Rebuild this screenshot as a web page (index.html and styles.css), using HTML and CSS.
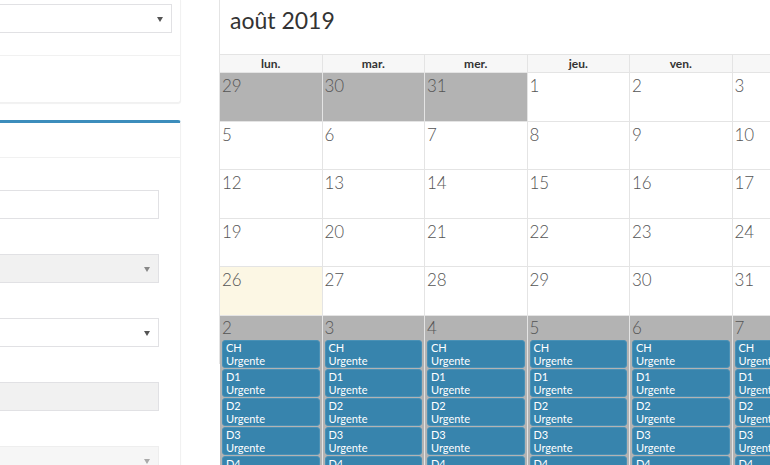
FILE: index.html
```html
<!DOCTYPE html>
<html lang="fr">
<head>
  <meta charset="UTF-8" />
  <title>Planning</title>
  <link rel="stylesheet" href="styles.css">
</head>
<body>
  <aside class="sidebar">
    <div class="box">
      <div class="box-body top">
        <div class="select"><span class="caret"></span></div>
      </div>
      <div class="box-footer"></div>
    </div>

    <div class="box primary">
      <div class="box-header"></div>
      <div class="box-body form">
        <div class="field"><div class="label"></div><div class="input"></div></div>
        <div class="field"><div class="label"></div><div class="select disabled"><span class="caret"></span></div></div>
        <div class="field"><div class="label"></div><div class="select"><span class="caret"></span></div></div>
        <div class="field"><div class="label"></div><div class="input disabled"></div></div>
        <div class="field"><div class="label"></div><div class="select disabled light"><span class="caret"></span></div></div>
      </div>
    </div>
  </aside>

  <main class="calendar">
    <h2 class="title">août 2019</h2>

    <div class="head">
      <div>lun.</div><div>mar.</div><div>mer.</div><div>jeu.</div><div>ven.</div><div>sam.</div><div>dim.</div>
    </div>

    <div id="weeks"></div>
  </main>

  <script>
    const weeks = [
      [[29, 'other'], [30, 'other'], [31, 'other'], 1, 2, 3, 4],
      [5, 6, 7, 8, 9, 10, 11],
      [12, 13, 14, 15, 16, 17, 18],
      [19, 20, 21, 22, 23, 24, 25],
      [[26, 'today'], 27, 28, 29, 30, 31, [1, 'other']],
      [[2, 'other'], [3, 'other'], [4, 'other'], [5, 'other'], [6, 'other'], [7, 'other'], [8, 'other']]
    ];
    const events = ['CH', 'D1', 'D2', 'D3', 'D4'];

    const container = document.getElementById('weeks');

    weeks.forEach((week, i) => {
      const row = document.createElement('div');
      row.className = 'week';
      week.forEach(day => {
        const cell = document.createElement('div');
        const num = Array.isArray(day) ? day[0] : day;
        cell.className = 'day' + (Array.isArray(day) ? ' ' + day[1] : '');
        cell.innerHTML = '<span class="num">' + num + '</span>';
        // last week is full of duty events
        if (i === weeks.length - 1) {
          events.forEach(name => {
            const ev = document.createElement('div');
            ev.className = 'event';
            ev.innerHTML = name + '<br>Urgente';
            cell.appendChild(ev);
          });
        }
        row.appendChild(cell);
      });
      container.appendChild(row);
    });
  </script>
</body>
</html>
```

FILE: styles.css
```css
body {
  margin: 0;
  font-family: Lato, "Open Sans", sans-serif;
  color: #333;
  background: #fff;
  display: flex;
  align-items: flex-start;
  overflow: hidden;
  height: 465px;
}

/* left column */
.sidebar {
  flex: none;
  width: 221px;
  margin-left: -40px;
  margin-right: 39px;
}

.box {
  background: #fff;
  border: 1px solid #f1f1f1;
  border-top: none;
  border-radius: 0 0 3px 3px;
  box-shadow: 0 1px 1px rgba(0, 0, 0, 0.06);
}

.box-body.top {
  padding: 4px 8px 22px 0;
}

.box-footer {
  height: 46px;
  border-top: 1px solid #f1f1f1;
}

.box.primary {
  margin-top: 17px;
  border-top: 3px solid #3c8dbc;
  border-radius: 3px;
  height: 400px;
}

.box-header {
  height: 34px;
  border-bottom: 1px solid #f1f1f1;
}

.box-body.form {
  padding: 12px 21px 0 0;
}

.field {
  margin-bottom: 15px;
}

.label {
  height: 20px;
}

.input, .select {
  height: 29px;
  border: 1px solid #e1e1e4;
  background: #fff;
  box-sizing: border-box;
  position: relative;
}

.disabled {
  background: #f1f1f1;
}

.disabled.light {
  background: #f6f6f6;
  border-color: #eeeeee;
}

.caret {
  position: absolute;
  right: 8px;
  top: 12px;
  border-top: 5px solid #555;
  border-left: 3px solid transparent;
  border-right: 3px solid transparent;
}

.disabled .caret {
  border-top-color: #888;
}

.disabled.light .caret {
  border-top-color: #aaa;
}

/* calendar */
.calendar {
  flex: none;
  width: 718px;
  border-left: 1px solid #e4e4e4;
  margin-left: -1px;
}

.title {
  margin: 0;
  height: 54px;
  padding: 6px 0 0 10px;
  box-sizing: border-box;
  font-size: 23px;
  font-weight: 400;
  color: #333;
}

.head, .week {
  display: grid;
  grid-template-columns: repeat(7, 102.5px);
}

.head {
  border-top: 1px solid #e4e4e4;
  border-bottom: 1px solid #e4e4e4;
}

.head div {
  height: 17px;
  line-height: 17px;
  font-size: 12px;
  font-weight: 700;
  text-align: center;
  background: #f7f7f7;
  border-right: 1px solid #e4e4e4;
}

.week {
  height: 48.5px;
}

.day {
  border-right: 1px solid #e4e4e4;
  border-bottom: 1px solid #e4e4e4;
  padding: 0 2px;
}

.day.other {
  background: #b3b3b3;
}

.day.today {
  background: #fcf7e4;
}

.num {
  display: block;
  font-size: 17px;
  font-weight: 300;
  line-height: 20px;
  padding-top: 3px;
  color: #555;
}

.week:last-child .num {
  padding-top: 2px;
  height: 22px;
}

.event {
  background: #3784ad;
  border: 1px solid #4a91b6;
  border-radius: 3px;
  color: #fff;
  font-size: 11px;
  line-height: 13px;
  padding: 0 3px;
  margin-bottom: 1px;
}
```
